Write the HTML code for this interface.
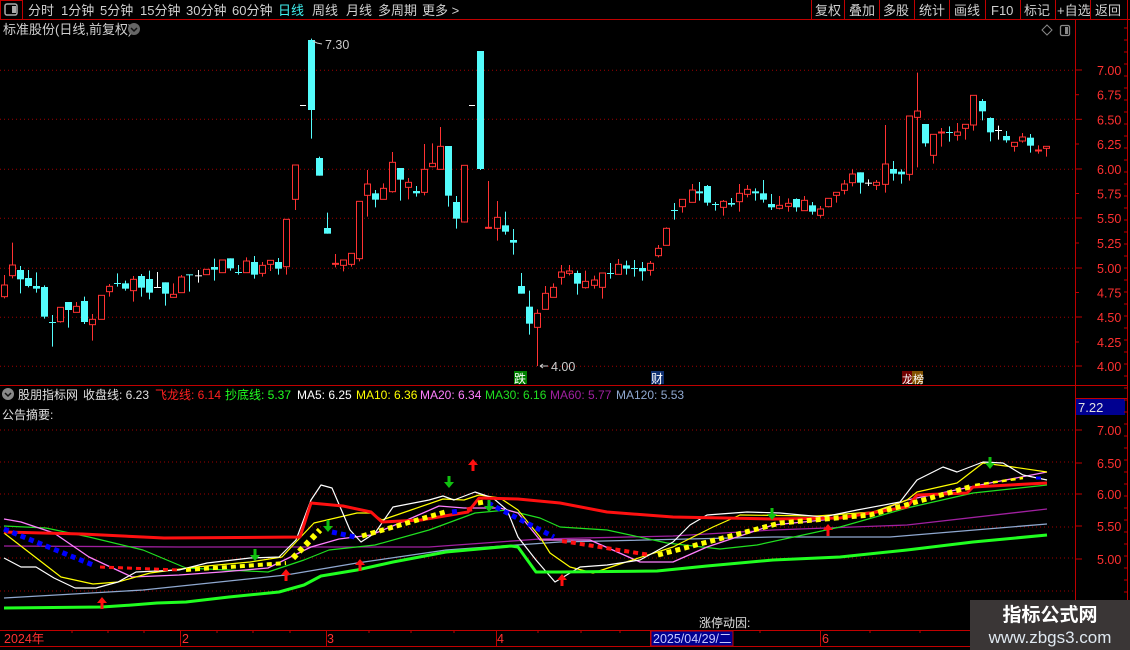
<!DOCTYPE html>
<html><head><meta charset="utf-8">
<style>
html,body{margin:0;padding:0;background:#000;}
body{width:1130px;height:650px;overflow:hidden;position:relative;font-family:"Liberation Sans","Noto Sans CJK SC",sans-serif;}
svg{position:absolute;left:0;top:0;}
text{font-family:"Liberation Sans","Noto Sans CJK SC",sans-serif;}
</style></head><body>
<svg id="s" width="1130" height="650" xmlns="http://www.w3.org/2000/svg">
<rect width="1130" height="650" fill="#000"/>
<line x1="0" y1="19.5" x2="1130" y2="19.5" stroke="#c00000"/>
<rect x="0.5" y="0.5" width="22" height="19" fill="none" stroke="#c00000"/>
<rect x="5" y="4" width="12" height="11" rx="2" fill="none" stroke="#aaa" stroke-width="1.5"/>
<rect x="12" y="6" width="4" height="7" fill="#aaa"/>
<g font-size="13" fill="#d0d0d0">
<text x="28" y="15">分时</text><text x="61" y="15">1分钟</text><text x="100" y="15">5分钟</text>
<text x="140" y="15">15分钟</text><text x="186" y="15">30分钟</text><text x="232" y="15">60分钟</text>
<text x="278" y="15" fill="#40f0f0">日线</text><text x="312" y="15">周线</text><text x="346" y="15">月线</text>
<text x="378" y="15">多周期</text><text x="422" y="15">更多 &gt;</text>
<text x="815" y="15">复权</text><text x="849" y="15">叠加</text><text x="883" y="15">多股</text>
<text x="919" y="15">统计</text><text x="954" y="15">画线</text><text x="991" y="15">F10</text>
<text x="1024" y="15">标记</text><text x="1057" y="15">+自选</text><text x="1095" y="15">返回</text>
</g>
<g stroke="#c00000">
<line x1="811.5" y1="0" x2="811.5" y2="20"/><line x1="844.5" y1="0" x2="844.5" y2="20"/>
<line x1="879.5" y1="0" x2="879.5" y2="20"/><line x1="914.5" y1="0" x2="914.5" y2="20"/>
<line x1="949.5" y1="0" x2="949.5" y2="20"/><line x1="985.5" y1="0" x2="985.5" y2="20"/>
<line x1="1020.5" y1="0" x2="1020.5" y2="20"/><line x1="1055.5" y1="0" x2="1055.5" y2="20"/>
<line x1="1090.5" y1="0" x2="1090.5" y2="20"/><line x1="1127.5" y1="0" x2="1127.5" y2="650"/>
</g>
<text x="3" y="34" font-size="13" fill="#d0d0d0">标准股份(日线,前复权)</text>
<circle cx="134" cy="29" r="6" fill="#666"/>
<path d="M131 28 l3 3 l3 -3" stroke="#111" stroke-width="1.5" fill="none"/>
<path d="M1047 25 l5 5 l-5 5 l-5 -5z" fill="none" stroke="#888"/>
<rect x="1060.5" y="25.5" width="9" height="10" rx="1.5" fill="none" stroke="#888" stroke-width="1.3"/>
<rect x="1065" y="27" width="3" height="7" fill="#888"/>
<line x1="1075.5" y1="20" x2="1075.5" y2="650" stroke="#c00000"/>
<line x1="0" y1="385.5" x2="1127" y2="385.5" stroke="#c00000"/>
<line x1="1075" y1="398.5" x2="1127" y2="398.5" stroke="#c00000"/>
<rect x="1076" y="399" width="49" height="16" fill="#000090"/>
<text x="1078" y="412" font-size="13" fill="#e0e0e0">7.22</text>
<line x1="0" y1="630.5" x2="1075" y2="630.5" stroke="#c00000"/>
<line x1="0" y1="646.5" x2="1075" y2="646.5" stroke="#c00000"/>
<g id="g"></g>
<circle cx="8" cy="394" r="6" fill="#888"/>
<path d="M5 393 l3 3 l3 -3" stroke="#111" stroke-width="1.5" fill="none"/>
<g font-size="12">
<text x="18" y="399" fill="#e0e0e0">股朋指标网</text>
<text x="83" y="399" fill="#e0e0e0">收盘线: 6.23</text>
<text x="155" y="399" fill="#ff2020">飞龙线: 6.14</text>
<text x="225" y="399" fill="#20ff20">抄底线: 5.37</text>
<text x="297" y="399" fill="#fff">MA5: 6.25</text>
<text x="356" y="399" fill="#ffff00">MA10: 6.36</text>
<text x="420" y="399" fill="#ff80ff">MA20: 6.34</text>
<text x="485" y="399" fill="#20e020">MA30: 6.16</text>
<text x="550" y="399" fill="#a020a0">MA60: 5.77</text>
<text x="616" y="399" fill="#8fa8d0">MA120: 5.53</text>
<text x="2" y="419" fill="#e0e0e0">公告摘要:</text>
<text x="699" y="627" fill="#e0e0e0">涨停动因:</text>
</g>
<g font-size="12.5" fill="#ff3030">
<text x="4" y="643">2024年</text><text x="182" y="643">2</text><text x="327" y="643">3</text>
<text x="497" y="643">4</text><text x="822" y="643">6</text>
</g>
<rect x="651" y="631" width="82" height="15" fill="#000090" stroke="#c00000"/>
<text x="653" y="643" font-size="12.5" fill="#c8c8ff">2025/04/29/二</text>
<rect x="970" y="600" width="160" height="50" fill="#3a3636"/>
<text x="1050" y="621" font-size="19" font-weight="bold" fill="#fff" text-anchor="middle">指标公式网</text>
<text x="1050" y="643" font-size="17" fill="#dfe8f0" text-anchor="middle">www.zbgs3.com</text>
</svg>
<script>
(function(){
var NS="http://www.w3.org/2000/svg",G=document.getElementById('g');
function el(t,a){var e=document.createElementNS(NS,t);for(var k in a)e.setAttribute(k,a[k]);G.appendChild(e);return e;}
function tx(x,y,s,c,sz){var e=el('text',{x:x,y:y,fill:c,'font-size':sz||12.5});e.textContent=s;}
[70.3,119.3,169.3,218.3,268.3,317.3,366.3,430,462,494,527,558,591].forEach(function(y){
 el('line',{x1:0,y1:y,x2:1075,y2:y,stroke:'#a00000','stroke-dasharray':'1,3'});});
var axT=[["7.00",70],["6.75",94.7],["6.50",119.3],["6.25",144],["6.00",169],["5.75",193.5],["5.50",218],["5.25",243],["5.00",268],["4.75",292.5],["4.50",317],["4.25",342],["4.00",366]];
axT.forEach(function(p,i){el('line',{x1:1075,y1:p[1],x2:i%2?1079:1082,y2:p[1],stroke:'#c00000'});tx(1097,p[1]+5,p[0],'#ff3030');});
[["7.00",430],["6.50",463],["6.00",494],["5.50",526],["5.00",559]].forEach(function(p){el('line',{x1:1075,y1:p[1],x2:1082,y2:p[1],stroke:'#c00000'});tx(1097,p[1]+5,p[0],'#ff3030');});
for(var y=28;y<650;y+=12)el('line',{x1:1124,y1:y,x2:1127,y2:y,stroke:'#c00000'});
[72,108,144,217,253,290,369,411,454,538,581,620,700,760,870,920,980,1030].forEach(function(x){el('line',{x1:x,y1:630,x2:x,y2:633,stroke:'#c00000'});});
[180,326,496,650,820].forEach(function(x){el('line',{x1:x+.5,y1:630,x2:x+.5,y2:646,stroke:'#c00000'});});
var G7=[[13,'r',765,800,735,805],[37,'r',705,737,638,745],[61,'c',720,748,708,790],[85,'c',744,768,720,772],[109,'c',768,776,727,788],[133,'c',771,860,766,866],[157,'c',876,878,855,950],[181,'r',832,875,832,878],[205,'c',816,840,816,893],[229,'r',829,847,816,847],[253,'c',813,876,800,882],[277,'r',868,884,852,932],[304,'r',796,868,796,868],[328,'r',769,785,762,800],[352,'c',759,762,730,770],[376,'c',760,776,752,782],[400,'r',748,782,738,815],[424,'c',738,773,732,800],[448,'c',747,788,722,808],[472,'w',771,773,726,773],[496,'c',757,791,757,827],[520,'r',793,802,760,802],[544,'r',741,788,735,788],[568,'c',733,735,733,785],[594,'w',736,738,720,758],[619,'r',718,734,718,734],[643,'c',711,719,686,752],[667,'r',690,728,690,728],[691,'c',685,715,685,722],[715,'c',726,728,705,734],[739,'r',693,728,682,728],[763,'c',696,734,678,746],[787,'r',706,730,696,740],[811,'r',691,703,691,723],[835,'c',696,716,684,734],[859,'r',568,710,568,734],[886,'r',405,508,405,540],[934,'c',30,240,26,326],[958,'c',384,437,380,437],[982,'c',594,611,548,611],[1006,'r',700,703,672,712]];
var G8=[[10,'r',690,706,690,724],[34,'r',670,703,670,710],[58,'r',514,686,514,694],[82,'r',462,496,420,560],[106,'c',490,509,480,532],[130,'r',475,508,460,508],[157,'r',397,485,366,488],[181,'c',414,449,414,512],[205,'r',457,472,444,508],[229,'c',483,490,468,500],[253,'r',418,487,342,496],[277,'r',400,410,340,412],[301,'r',349,418,291,418],[325,'c',348,497,348,530],[349,'c',516,566,498,596],[373,'r',406,576,406,578],[421,'c',63,417,63,420],[445,'r',592,595,453,595],[472,'r',562,595,513,632],[496,'c',586,605,545,614],[520,'c',630,638,597,674],[544,'c',768,791,729,791],[568,'c',830,881,782,914],[592,'r',850,892,838,1008],[616,'r',790,838,768,838],[640,'r',772,802,760,802],[664,'r',726,742,705,764],[688,'r',723,730,705,736],[712,'c',729,761,722,794],[736,'r',754,773,722,776],[763,'r',750,766,737,776],[787,'r',729,772,729,806],[811,'c',729,731,699,746],[835,'r',703,733,687,733],[859,'c',706,716,692,734],[883,'c',714,716,690,740],[907,'c',714,724,696,752],[931,'r',700,721,693,737],[955,'r',655,677,645,682],[979,'r',595,646,592,646],[1003,'c',540,542,519,569],[1027,'r',508,530,508,548]];
var G9=[[5,'r',480,517,462,517],[28,'c',484,490,456,512],[52,'c',468,518,465,527],[76,'c',522,524,516,542],[100,'r',514,532,510,557],[124,'c',519,524,504,530],[148,'r',490,515,462,545],[172,'r',478,493,465,502],[196,'c',484,490,475,512],[220,'c',490,509,450,518],[244,'c',522,532,492,540],[268,'r',526,535,498,538],[295,'r',520,529,505,545],[319,'c',507,532,505,545],[343,'r',511,542,498,542],[367,'c',526,545,516,554],[391,'r',537,556,528,563],[415,'r',505,530,505,532],[439,'r',487,496,487,518],[463,'r',462,481,450,493],[487,'r',432,458,418,469],[511,'c',427,458,427,491],[535,'w',458,460,448,468],[559,'r',457,466,450,480],[586,'r',402,463,285,488],[610,'c',417,431,393,452],[634,'c',425,433,418,461],[658,'r',258,433,258,452],[682,'r',243,262,128,412],[706,'c',282,340,282,350],[730,'r',313,376,313,401],[754,'r',306,310,294,350],[778,'c',306,309,289,335],[802,'r',306,316,279,332],[826,'r',283,295,283,329],[850,'r',196,285,196,302],[877,'c',213,244,207,271],[901,'c',264,307,262,334],[925,'w',300,302,287,329],[949,'c',318,331,303,338],[973,'r',337,349,337,365],[997,'r',321,333,309,338],[1021,'c',323,347,312,368],[1045,'r',360,364,346,371],[1069,'r',349,355,349,380]];
function draw(arr,ox){arr.forEach(function(d){
 var x=Math.round(ox+d[0]/3),bt=30+d[2]/3,bb=30+d[3]/3,hi=30+d[4]/3,lo=30+d[5]/3;
 var col=d[1]=='r'?'#ff3232':d[1]=='c'?'#54fcfc':'#ffffff';
 el('line',{x1:x+.5,y1:hi,x2:x+.5,y2:lo,stroke:col});
 if(bb-bt<1.5){el('line',{x1:x-3,y1:bt+.5,x2:x+4,y2:bt+.5,stroke:col,'stroke-width':d[1]=='r'?2:1});}
 else if(d[1]=='r'){el('rect',{x:x-2.5,y:bt,width:6,height:bb-bt,fill:'#000',stroke:col});}
 else el('rect',{x:x-3,y:bt,width:7,height:bb-bt,fill:col});
});}
draw(G7,0);draw(G8,340);draw(G9,690);
el('line',{x1:300,y1:105.5,x2:306,y2:105.5,stroke:'#fff'});
el('line',{x1:469,y1:105.5,x2:475,y2:105.5,stroke:'#fff'});
el('path',{d:'M313 41 L317 43 L322 44',stroke:'#ccc',fill:'none'});tx(325,49,'7.30','#cccccc',12.5);
el('path',{d:'M540 366 L548 366 M540 366 l3 -2 M540 366 l3 2',stroke:'#ccc',fill:'none'});tx(551,371,'4.00','#cccccc',12.5);
el('rect',{x:514,y:371,width:13,height:13,fill:'#008000'});tx(514,383,'跌','#fff',12);
el('rect',{x:651,y:371,width:13,height:13,fill:'#103070'});tx(651,383,'财','#fff',12);
el('rect',{x:902,y:371,width:10,height:13,fill:'#700000'});el('rect',{x:912,y:371,width:11,height:13,fill:'#805000'});tx(902,383,'龙榜','#fff',11);
function pl(pts,c,w,da){var a={points:pts.map(function(p){return p.join(',')}).join(' '),fill:'none',stroke:c,'stroke-width':w,'stroke-linejoin':'round'};if(da)a['stroke-dasharray']=da;el('polyline',a);}
pl([[4,598],[143,590],[286,575],[357,563],[446,550],[560,542],[773,537],[890,537],[1047,524]],'#8fa8d0',1.3);
pl([[4,546],[179,547],[321,547],[429,547],[540,539],[673,536],[773,530],[907,525],[1047,509]],'#a020a0',1.3);
pl([[4,526],[46,528],[89,537],[143,550],[186,568],[268,572],[304,560],[329,550],[375,545],[429,530],[475,513],[507,510],[540,518],[560,527],[607,530],[667,543],[720,549],[757,545],[840,527],[907,508],[973,493],[1047,485]],'#20e020',1.2);
pl([[4,519],[21,522],[54,533],[89,557],[132,577],[179,575],[221,572],[268,568],[311,547],[339,539],[371,535],[407,520],[439,506],[464,508],[500,508],[518,513],[540,540],[590,540],[640,562],[673,562],[707,547],[773,525],[823,520],[873,513],[907,500],[990,483],[1047,472]],'#ff80ff',1.3);
pl([[4,533],[39,560],[61,577],[93,584],[118,582],[150,573],[196,567],[250,562],[282,557],[296,542],[314,523],[357,513],[371,513],[382,520],[411,510],[443,499],[464,500],[479,495],[500,498],[518,510],[540,537],[550,553],[570,567],[593,573],[623,563],[673,547],[713,527],[740,515],[817,516],[873,512],[907,500],[917,492],[957,483],[983,463],[1013,467],[1047,472]],'#ffff00',1.2);
pl([[4,558],[21,567],[36,567],[54,578],[75,588],[96,588],[118,582],[136,572],[179,570],[207,563],[250,558],[279,557],[296,540],[311,500],[321,485],[332,488],[350,530],[361,542],[375,533],[393,507],[429,500],[443,496],[454,500],[475,492],[493,498],[507,510],[518,537],[536,560],[555,582],[580,567],[607,565],[640,560],[673,542],[690,525],[707,515],[747,512],[780,513],[823,517],[857,510],[900,502],[917,480],[943,467],[957,472],[983,462],[1003,463],[1023,475],[1047,480]],'#ffffff',1.2);
pl([[4,532],[82,534],[164,538],[300,537],[311,503],[343,506],[371,512],[382,522],[421,520],[468,512],[479,498],[518,499],[560,503],[607,512],[673,517],[773,519],[840,518],[907,507],[917,495],[967,493],[973,487],[1047,483]],'#ff1010',3);
pl([[4,608],[102,607],[132,605],[157,603],[186,602],[229,597],[279,592],[304,585],[321,576],[357,570],[393,562],[446,552],[511,546],[518,547],[536,572],[560,572],[657,571],[707,566],[773,560],[840,557],[907,550],[973,542],[1047,535]],'#20ff20',3);
function seg(a,c,w){pl(a,c,w||5,'5,4');}
seg([[4,529],[93,565]],'#0000ff');
seg([[100,567],[179,570]],'#ff1010',3);
seg([[186,570],[286,563]],'#ffff00',4);
seg([[293,558],[320,530]],'#ffff00',6);
seg([[332,532],[355,537]],'#0000ff');
seg([[362,536],[445,512]],'#ffff00');
seg([[452,512],[460,511]],'#0000ff');seg([[467,510],[475,508]],'#ff1010');seg([[478,503],[484,502]],'#ffff00');
seg([[488,503],[554,537]],'#0000ff');
seg([[562,541],[650,555]],'#ff1010',4);
seg([[658,555],[780,523],[870,515],[973,486]],'#ffff00');
seg([[975,485],[1023,478]],'#ffff00',2.5);
seg([[1036,478],[1045,478]],'#0000ff',3);
function up(x,y){el('path',{d:'M'+x+' '+(y-6)+' l-5 6 h3.5 v6 h3 v-6 h3.5z',fill:'#ff1010'});}
function dn(x,y){el('path',{d:'M'+x+' '+(y+6)+' l-5 -6 h3.5 v-6 h3 v6 h3.5z',fill:'#10c010'});}
up(102,603);up(286,575);up(360,565);up(473,465);up(562,580);up(828,530);
dn(255,555);dn(328,526);dn(449,482);dn(489,506);dn(772,514);dn(990,463);
})();
</script>
</body></html>
